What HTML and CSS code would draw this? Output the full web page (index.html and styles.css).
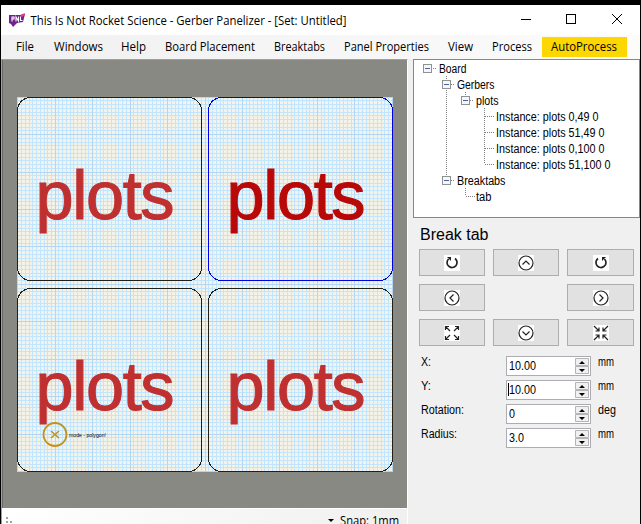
FILE: index.html
```html
<!DOCTYPE html>
<html lang="en">
<head>
<meta charset="utf-8">
<title>This Is Not Rocket Science - Gerber Panelizer</title>
<link rel="stylesheet" href="styles.css">
</head>
<body>
<div class="window">
  <header class="titlebar">
    <svg class="logo" width="17" height="14" viewBox="0 0 17 14"><path d="M0 2h12l4-1-2 8-6 1-4 4-2-3-2-1z" fill="#70218d"/><path d="M11 2l5-2-1 3-3 1z" fill="#e33586"/><path d="M3 8.500V4h2v2H3M7 8.500V4l2.500 4V3.500M11.500 3.500v4h2" fill="none" stroke="#fff" stroke-width="1.100"/></svg>
    <span class="title"><svg width="320" height="20"><text x="0.5" y="14" textLength="316" lengthAdjust="spacingAndGlyphs">This Is Not Rocket Science - Gerber Panelizer - [Set: Untitled]</text></svg></span>
    <svg class="controls" width="108" height="12" viewBox="0 0 108 12" fill="none" stroke="#000" shape-rendering="crispEdges"><path d="M1 6.500h10M46.500 1.500h9v9h-9z"/><path d="M92 1l10 10M102 1L92 11" shape-rendering="auto"/></svg>
  </header>
  <nav class="menu" id="menu"></nav>
  <main class="content">
    <section class="workspace">
      <div class="canvas"><svg id="panel" width="401" height="448" viewBox="3 60 401 448"></svg></div>
      <footer class="status">
        <svg width="10" height="10" viewBox="0 0 10 10" fill="#a0a0a0"><path d="M0 1h2v2H0zM0 5h2v2H0zM4 5h2v2H4z"/></svg>
        <span class="snap"><i class="caret"></i><svg width="61" height="15"><text x="0" y="12" textLength="59" lengthAdjust="spacingAndGlyphs">Snap: 1mm</text></svg></span>
      </footer>
    </section>
    <aside class="side">
      <div class="tree"><svg id="tree" width="225" height="155" viewBox="414 61 225 155"></svg></div>
      <h1 class="heading">Break tab</h1>
      <div class="buttons" id="buttons"></div>
      <div class="fields" id="fields"></div>
    </aside>
  </main>
</div>
<script src="main.js"></script>
</body>
</html>
```
FILE: styles.css
```css
* { box-sizing: border-box; }
body { margin: 0; width: 641px; height: 524px; overflow: hidden; background: #000; color: #000; font-family: "Open Sans", "Noto Sans", sans-serif; font-size: 12px; }
svg { display: block; overflow: visible; }
.window { margin: 5px 1px 0; height: 519px; background: #f0f0f0; display: flex; flex-direction: column; }
.titlebar { height: 30px; flex: none; background: #fff; display: flex; align-items: center; padding: 0 12px 0 8px; }
.title { margin: 0 0 0 4px; flex: 1; }
.title svg { margin-top: 1px; }
.controls { margin-top: -2px; flex: none; }
.menu { height: 24px; flex: none; display: flex; padding: 2px 0 2px 7px; background: linear-gradient(90deg, #f0f0f0, #fcfcfc); }
.menu span { height: 20px; padding-left: 8px; flex: none; }
.menu .auto { background: #ffd700; padding-left: 9px; }
.content { flex: 1; min-height: 0; display: flex; }
.workspace { width: 407px; flex: none; border-left: 1px solid #a0a0a0; border-top: 1px solid #a0a0a0; border-right: 1px solid #fff; }
.canvas { border-left: 1px solid #696969; height: 448px; background: #888983; overflow: hidden; }
.status { height: 16px; background: linear-gradient(90deg, #fff, #f0f0f0); border-top: 1px solid #fff; display: flex; justify-content: space-between; padding: 7px 6px 0 4px; }
.snap { display: flex; margin-top: -3px; }
.caret { width: 0; height: 0; border: 3px solid transparent; border-top-color: #000; border-bottom: 0; margin: 6px 6px 0 0; }
.side { width: 232px; padding: 0 0 0 5px; font-family: "Liberation Sans", sans-serif; }
.tree { width: 227px; height: 159px; border: 1px solid #828790; background: #fff; }
.heading { font: 16px/20px "Liberation Sans", sans-serif; margin: 7px 0 4px 7px; }
.buttons { display: grid; grid-template-columns: 66px 66px 67px; grid-template-rows: repeat(3, 27px); gap: 8px; margin: 0 0 0 6px; }
.button { border: 1px solid #adadad; background: #e1e1e1; display: grid; place-items: center; padding: 0; }
.button svg { background: #fff; }
.fields { margin: 10px 0 0 7px; }
.field { display: grid; grid-template-columns: 86px 85px 1fr; height: 24px; align-items: start; }
.field .unit { margin-left: 7px; }
.number { height: 20px; border: 1px solid #abadb3; background: #fff; display: flex; justify-content: space-between; }
.spinner { width: 14px; height: 16px; margin: 1px; background: #f0f0f0; }
```
FILE: main.js
```js
const byId = id => document.getElementById(id);
const text = (x, y, s, w, extra = '', adjust = 'spacingAndGlyphs') => `<text x="${x}" y="${y}" textLength="${w}" lengthAdjust="${adjust}" ${extra}>${s}</text>`;

const menu = [['File', 38, 18], ['Windows', 67, 49], ['Help', 44, 25], ['Board Placement', 109, 90], ['Breaktabs', 70, 51], ['Panel Properties', 104, 85], ['View', 44, 25], ['Process', 58, 40], ['AutoProcess', 85, 66]];
byId('menu').innerHTML = menu.map(([s, w, tw]) => `<span class="${s === 'AutoProcess' ? 'auto' : ''}" style="width:${w}px"><svg width="${tw + 3}" height="20">${text(0, 14, s, tw)}</svg></span>`).join('');

// Millimetre grid, heavier every 10 mm
let minor = '', major = '';
for (let i = 0; i <= 100; i++) {
  const x = Math.floor(17.8 + i * 3.745) + .5;
  const y = Math.floor(471.6 - i * 3.745) + .5;
  const d = `M${x} 97V472M17 ${y}H393`;
  if (i % 10) minor += d; else major += d;
}
let out = `<path d="M17 97h376v375H17z" fill="#f4f3e9"/><g fill="none" shape-rendering="crispEdges"><path d="${minor}" stroke="#c1e5ff"/><path d="${major}" stroke="#b2d6f4"/></g>`;
const boards = [[17.5, 97.5, 0], [208.5, 97.5, 1], [17.5, 288.5, 0], [208.5, 288.5, 0]];
for (const [x, y, active] of boards) {
  const color = active ? '#b80808' : '#c03030';
  out += `<rect x="${x}" y="${y}" width="184" height="183" rx="13" fill="none" stroke="${active ? '#0000e8' : '#202018'}" shape-rendering="crispEdges"/>`;
  out += text(x + 18, y + 121, 'plots', 139, `font-family="Liberation Sans" font-size="68.500" fill="${color}" stroke="${color}" stroke-width="1.100"`, 'spacing');
}
out += `<circle cx="55" cy="434.500" r="11.500" fill="none" stroke="#c49218" stroke-width="1.800"/><path d="M51 431l8 7M59 431l-8 7" stroke="#c49218" stroke-width="1.500"/>`;
out += text(69, 436.5, 'mode - polygon!', 37, 'font-family="Liberation Sans" font-size="5"');
byId('panel').innerHTML = out;

const nodes = [[439, 69, 'Board', 27], [457, 85, 'Gerbers', 37], [476, 101, 'plots', 22], [496, 117, 'Instance: plots 0,49 0', 102], [496, 133, 'Instance: plots 51,49 0', 108], [496, 149, 'Instance: plots 0,100 0', 108], [496, 165, 'Instance: plots 51,100 0', 114], [457, 181, 'Breaktabs', 48], [476, 197, 'tab', 15]];
byId('tree').innerHTML = `<path d="M433 69.500h4M446.500 77v104M451 85.500h4M465.500 93v4M470 101.500h4M484.500 109v56M485 117.500h9M485 133.500h9M485 149.500h9M485 165.500h9M451 181.500h4M465.500 189v8M466 197.500h9" stroke="#808080" stroke-dasharray="1 1" fill="none"/>`
  + nodes.map(([x, y, s, w]) => text(x, y + 5, s, w + .5)).join('')
  + [[427, 69], [446, 85], [465, 101], [446, 181]].map(([x, y]) => `<rect x="${x - 3.5}" y="${y - 3.5}" width="8" height="8" fill="#f6f6f6" stroke="#919191"/><path d="M${x - 2} ${y + .5}h5" stroke="#4b63a7"/>`).join('');

const ring = '<circle cx="8" cy="8" r="7"/>';
const icons = [
  '<path d="M4.500 4A5 5 0 1 0 11 3.500" stroke-width="1.700"/><path d="M3 2h4v4z" fill="#222" stroke="none"/>',
  ring + '<path d="M4.500 9.500L8 6l3.500 3.500"/>',
  '<path d="M11.500 4A5 5 0 1 1 5 3.500" stroke-width="1.700"/><path d="M13 2H9v4z" fill="#222" stroke="none"/>',
  ring + '<path d="M9.500 4.500L6 8l3.500 3.500"/>', '',
  ring + '<path d="M6.500 4.500L10 8l-3.500 3.500"/>',
  '<path d="M6 6L1.500 1.500M10 6l4.500-4.500M6 10l-4.500 4.500M10 10l4.500 4.500M1.500 5V1.500H5M11 1.500h3.500V5M1.500 11v3.500H5M11 14.500h3.500V11"/>',
  ring + '<path d="M4.500 6.500L8 10l3.500-3.500"/>',
  '<path d="M1 1l5 5M15 1l-5 5M1 15l5-5M15 15l-5-5M6 2.500V6H2.500M10 2.500V6h3.500M2.500 10H6v3.500M13.500 10H10v3.500"/>'];
byId('buttons').innerHTML = icons.map(s => s ? `<button class="button"><svg width="16" height="16" viewBox="0 0 16 16" fill="none" stroke="#222" stroke-width="1.200">${s}</svg></button>` : '<span></span>').join('');

const fields = [['X:', 10, '10.00', 27, 'mm', 16], ['Y:', 10, '10.00', 27, 'mm', 16], ['Rotation:', 43, '0', 6, 'deg', 18], ['Radius:', 36, '3.0', 15, 'mm', 16]];
byId('fields').innerHTML = fields.map(([l, lw, v, vw, u, uw], i) => `<div class="field"><svg width="60" height="18">${text(1, 10, l, lw)}</svg><div class="number"><svg width="40" height="18">${text(2, 13, v, vw)}${i === 1 ? '<path d="M1.500 2v13" stroke="#000"/>' : ''}</svg><svg class="spinner" viewBox="0 0 14 16"><path d="M.5.500h13v7H.500zM.5 8.500h13v7H.500z" fill="#f0f0f0" stroke="#b5b5b5"/><path d="M4 6h6L7 3zM4 11h6l-3 3z" fill="#000"/></svg></div><svg class="unit" width="25" height="18">${text(0, 10, u, uw)}</svg></div>`).join('');
```
